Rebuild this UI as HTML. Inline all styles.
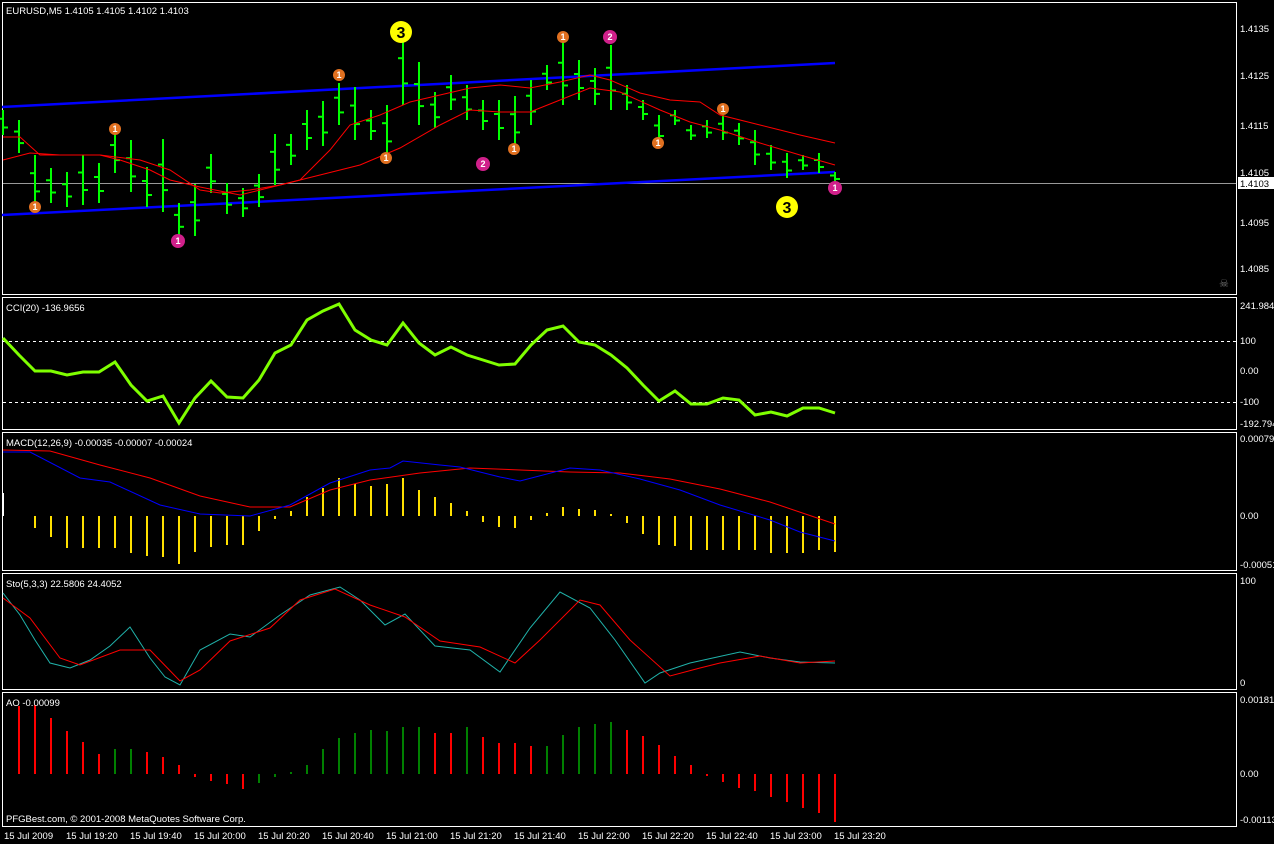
<!DOCTYPE html>
<html><head><meta charset="utf-8"><style>
html,body{margin:0;padding:0;background:#000;width:1274px;height:844px;overflow:hidden}
svg{display:block}
text{font-family:"Liberation Sans",sans-serif;font-size:9.5px;fill:#fff}
</style></head><body>
<svg id="s" width="1274" height="844" xmlns="http://www.w3.org/2000/svg">
<rect width="1274" height="844" fill="#000"/>
<g fill="none" stroke="#fff" stroke-width="1">
<rect x="2.5" y="2.5" width="1234" height="292"/>
<rect x="2.5" y="297.5" width="1234" height="132"/>
<rect x="2.5" y="432.5" width="1234" height="138"/>
<rect x="2.5" y="573.5" width="1234" height="116"/>
<rect x="2.5" y="692.5" width="1234" height="134"/>
</g>
<line x1="3" y1="183.5" x2="1236" y2="183.5" stroke="#999"/>
<g stroke="#fff" stroke-dasharray="3,3"><line x1="3" y1="341.5" x2="1236" y2="341.5"/><line x1="3" y1="402.5" x2="1236" y2="402.5"/></g>
<line x1="2" y1="107" x2="835" y2="63" stroke="#0000ff" stroke-width="2.5"/>
<line x1="2" y1="215" x2="835" y2="172" stroke="#0000ff" stroke-width="2.5"/>
<g id="bars"></g>
<g id="ind"></g>
<g id="mk"></g>
<text x="6" y="14">EURUSD,M5  1.4105 1.4105 1.4102 1.4103</text>
<text x="6" y="311">CCI(20) -136.9656</text>
<text x="6" y="446">MACD(12,26,9) -0.00035 -0.00007 -0.00024</text>
<text x="6" y="587">Sto(5,3,3) 22.5806 24.4052</text>
<text x="6" y="706">AO -0.00099</text>
<text x="6" y="822">PFGBest.com, © 2001-2008 MetaQuotes Software Corp.</text>
<text x="1219" y="287" style="fill:#777;font-size:11px">☠</text>
<g>
<text x="1240" y="32">1.4135</text><text x="1240" y="79">1.4125</text><text x="1240" y="129">1.4115</text><text x="1240" y="176">1.4105</text><text x="1240" y="226">1.4095</text><text x="1240" y="272">1.4085</text>
<rect x="1238" y="177" width="36" height="12" fill="#fff"/><text x="1240" y="187" style="fill:#000">1.4103</text>
<text x="1240" y="309">241.9849</text><text x="1240" y="344">100</text><text x="1240" y="374">0.00</text><text x="1240" y="405">-100</text><text x="1240" y="427">-192.794</text>
<text x="1240" y="442">0.00079</text><text x="1240" y="519">0.00</text><text x="1240" y="568">-0.00051</text>
<text x="1240" y="584">100</text><text x="1240" y="686">0</text>
<text x="1240" y="703">0.00181</text><text x="1240" y="777">0.00</text><text x="1240" y="823">-0.00113</text>
</g>
<g>
<text x="4" y="839">15 Jul 2009</text><text x="66" y="839">15 Jul 19:20</text><text x="130" y="839">15 Jul 19:40</text><text x="194" y="839">15 Jul 20:00</text><text x="258" y="839">15 Jul 20:20</text><text x="322" y="839">15 Jul 20:40</text><text x="386" y="839">15 Jul 21:00</text><text x="450" y="839">15 Jul 21:20</text><text x="514" y="839">15 Jul 21:40</text><text x="578" y="839">15 Jul 22:00</text><text x="642" y="839">15 Jul 22:20</text><text x="706" y="839">15 Jul 22:40</text><text x="770" y="839">15 Jul 23:00</text><text x="834" y="839">15 Jul 23:20</text>
</g>
</svg>
<script>
var NS="http://www.w3.org/2000/svg";
function el(p,t,a){var e=document.createElementNS(NS,t);for(var k in a)e.setAttribute(k,a[k]);document.getElementById(p).appendChild(e);return e}
var hl=[[110,135],[120,153],[155,207],[168,203],[172,207],[155,205],[163,203],[130,173],[140,192],[167,207],[139,212],[203,237],[184,236],[154,193],[183,214],[188,217],[174,207],[134,185],[134,165],[110,150],[101,146],[83,125],[87,140],[110,140],[105,157],[33,105],[62,125],[92,128],[75,110],[85,120],[100,130],[100,140],[96,148],[80,125],[65,90],[40,105],[60,100],[68,105],[45,110],[85,110],[100,120],[115,145],[110,125],[125,140],[120,138],[115,140],[123,145],[130,165],[145,170],[153,178],[155,170],[153,173],[172,182]];
hl.forEach(function(b,i){var x=3+i*16,h=b[0],l=b[1],o=h+(l-h)*0.35,c=h+(l-h)*0.7;
el("bars","line",{x1:x,y1:h,x2:x,y2:l,stroke:"#00ff00","stroke-width":2});
el("bars","line",{x1:x-5,y1:o,x2:x,y2:o,stroke:"#00ff00","stroke-width":2});
el("bars","line",{x1:x,y1:c,x2:x+5,y2:c,stroke:"#00ff00","stroke-width":2});});
function pl(pts,col,w){el("ind","polyline",{points:pts,fill:"none",stroke:col,"stroke-width":w})}
pl("3,137 20,137 40,155 60,155 100,155 120,160 150,170 170,180 200,187 240,195 260,190 300,180 330,150 350,125 380,115 410,102 440,95 470,88 500,85 530,88 560,82 590,75 610,80 640,93 670,100 700,102 720,115 760,125 800,135 835,143","#ff0000",1);
pl("3,160 30,153 60,155 100,155 140,160 170,170 200,190 220,193 250,190 280,185 320,175 360,165 400,148 440,125 470,110 500,112 530,112 560,100 590,88 620,92 660,110 690,122 720,130 760,143 800,155 835,165","#ff0000",1);
pl("3,338 19,355 35,371 51,371 67,375 83,372 99,372 115,362 131,385 147,401 163,396 179,423 195,398 211,381 227,397 243,398 259,380 275,353 291,345 307,320 323,311 339,304 355,330 371,340 387,345 403,323 419,343 435,355 451,347 467,355 483,360 499,365 515,364 531,345 547,330 563,326 579,342 595,345 611,355 627,368 643,385 659,401 675,391 691,404 707,404 723,398 739,400 755,415 771,412 787,416 803,408 819,408 835,413","#7fff00",3);
var mb=[-23,0,12,21,32,32,32,32,37,40,41,48,36,31,29,29,15,3,-5,-19,-28,-38,-32,-30,-32,-38,-26,-19,-13,-5,6,11,12,4,-3,-9,-7,-6,-2,7,18,29,30,34,34,34,34,34,37,37,37,34,36];
mb.forEach(function(v,i){var x=3+i*16;if(v==0)return;el("ind","line",{x1:x,y1:516,x2:x,y2:516+v,stroke:i==0?"#fff":"#ffe000","stroke-width":2});});
pl("3,450 50,451 100,465 150,478 200,496 250,507 290,507 330,490 370,480 420,473 470,468 520,470 570,472 620,473 670,479 720,489 770,502 835,524","#ff0000",1);
pl("3,452 30,452 80,478 110,482 160,505 200,514 250,516 290,505 330,483 370,470 390,468 403,461 440,465 460,467 500,477 520,481 570,468 600,470 640,479 680,490 720,505 770,520 800,532 835,541","#0000ff",1);
pl("3,593 20,615 35,640 50,663 70,668 90,660 110,646 130,627 150,658 165,677 180,685 200,650 230,634 250,637 280,615 310,595 340,587 360,600 385,625 405,614 435,646 470,650 500,672 530,628 560,592 590,608 615,640 645,683 660,673 690,663 740,652 770,658 800,662 835,663","#20b2aa",1);
pl("3,598 30,618 60,658 80,665 120,650 150,650 180,681 200,670 230,641 270,628 300,600 335,589 370,605 405,617 440,641 480,647 515,663 540,640 580,600 600,605 630,640 670,676 700,668 720,663 760,656 800,663 835,661","#ff0000",1);
var ao=[[706,0],[706,0],[705,0],[718,0],[731,0],[742,0],[754,0],[749,1],[749,1],[752,0],[757,0],[765,0],[777,0],[781,0],[784,0],[789,0],[783,1],[777,1],[772,1],[765,1],[749,1],[738,1],[733,1],[730,1],[731,1],[727,1],[727,1],[733,0],[733,0],[727,1],[737,0],[743,0],[743,0],[746,0],[746,1],[735,1],[727,1],[724,1],[722,1],[730,0],[736,0],[745,0],[756,0],[765,0],[776,0],[782,0],[788,0],[791,0],[797,0],[802,0],[808,0],[813,0],[822,0]];
ao.forEach(function(a,i){if(i==0)return;var x=3+i*16;el("ind","line",{x1:x,y1:774,x2:x,y2:a[0],stroke:a[1]?"#008000":"#ff0000","stroke-width":2});});
var mk=[[35,207,"#e07020",6,"1"],[115,129,"#e07020",6,"1"],[178,241,"#d0208a",7,"1"],[339,75,"#e07020",6,"1"],[386,158,"#e07020",6,"1"],[401,32,"#ffff00",11,"3"],[483,164,"#d0208a",7,"2"],[514,149,"#e07020",6,"1"],[563,37,"#e07020",6,"1"],[610,37,"#d0208a",7,"2"],[658,143,"#e07020",6,"1"],[723,109,"#e07020",6,"1"],[787,207,"#ffff00",11,"3"],[835,188,"#d0208a",7,"1"]];
mk.forEach(function(m){el("mk","circle",{cx:m[0],cy:m[1],r:m[3],fill:m[2]});var t=el("mk","text",{x:m[0],y:m[1]+(m[3]>8?6:3),"text-anchor":"middle",style:"font-size:"+(m[3]>8?16:9)+"px;font-weight:bold;fill:"+(m[3]>8?"#000":"#fff")});t.textContent=m[4];});
</script>
</body></html>
